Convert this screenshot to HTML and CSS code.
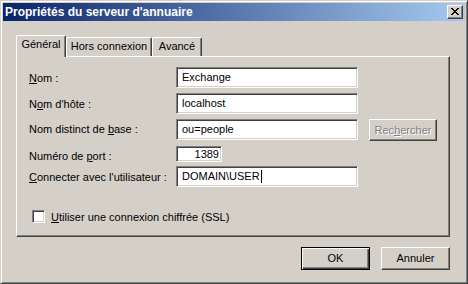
FILE: index.html
```html
<!DOCTYPE html>
<html lang="fr">
<head>
    <meta charset="UTF-8">
    <title>Propriétés du serveur d'annuaire</title>
    <link rel="stylesheet" href="styles.css">
</head>
<body>
    <div class="window">
        <div class="titlebar">
            <span class="title">Propriétés du serveur d'annuaire</span>
            <div class="close">
                <svg width="8" height="7" viewBox="0 0 8 7" shape-rendering="crispEdges">
                    <path fill="#000" d="M0 0h2v1H0zM6 0h2v1H6zM1 1h2v1H1zM5 1h2v1H5zM2 2h4v1H2zM3 3h2v1H3zM2 4h4v1H2zM1 5h2v1H1zM5 5h2v1H5zM0 6h2v1H0zM6 6h2v1H6z"/>
                </svg>
            </div>
        </div>

        <div class="content">
            <div class="tabs">
                <div class="tab tab-active tab-general">Général</div>
                <div class="tab tab-offline">Hors connexion</div>
                <div class="tab tab-advanced">Avancé</div>
            </div>

            <div class="panel">
                <div class="row">
                    <span class="label"><u>N</u>om :</span>
                    <div class="field field-wide">Exchange</div>
                </div>
                <div class="row">
                    <span class="label">N<u>o</u>m d'hôte :</span>
                    <div class="field field-wide">localhost</div>
                </div>
                <div class="row row-search">
                    <span class="label">Nom distinct de <u>b</u>ase :</span>
                    <div class="field field-wide">ou=people</div>
                    <div class="btn btn-search" aria-disabled="true">Rec<u>h</u>ercher</div>
                </div>
                <div class="row row-port">
                    <span class="label">Numéro de <u>p</u>ort :</span>
                    <div class="field field-port">1389</div>
                </div>
                <div class="row">
                    <span class="label"><u>C</u>onnecter avec l'utilisateur :</span>
                    <div class="field field-wide">DOMAIN\USER<span class="caret"></span></div>
                </div>

                <div class="check">
                    <span class="checkbox"></span>
                    <span><u>U</u>tiliser une connexion chiffrée (SSL)</span>
                </div>
            </div>

            <div class="actions">
                <div class="btn btn-default">OK</div>
                <div class="btn">Annuler</div>
            </div>
        </div>
    </div>
</body>
</html>
```

FILE: styles.css
```css
* {
    margin: 0;
    padding: 0;
    box-sizing: border-box;
}

body {
    font-family: 'Liberation Sans', Arial, sans-serif;
    font-size: 11px;
    color: #000;
    background: #d4d0c8;
}

u {
    text-decoration: underline;
    text-underline-offset: 1px;
}

.window {
    width: 468px;
    height: 284px;
    background: #d4d0c8;
    border: 1px solid;
    border-color: #d4d0c8 #404040 #404040 #d4d0c8;
    box-shadow: inset 1px 1px #fff, inset -1px -1px #808080;
    padding: 2px;
}

.titlebar {
    height: 18px;
    display: flex;
    align-items: center;
    justify-content: space-between;
    padding: 0 2px 0 2px;
    background: linear-gradient(to right, #0a246a 0%, #a6caf0 100%);
}

.title {
    color: #fff;
    font-weight: bold;
    font-size: 12px;
    line-height: 18px;
    white-space: nowrap;
}

.close {
    width: 16px;
    height: 14px;
    background: #d4d0c8;
    border: 1px solid;
    border-color: #fff #404040 #404040 #fff;
    box-shadow: inset -1px -1px #808080;
    padding: 2px 0 0 3px;
}

.close svg {
    display: block;
}

.content {
    padding: 14px 15px 0 13px;
}

.tabs {
    display: flex;
    align-items: flex-end;
    height: 21px;
    position: relative;
    z-index: 1;
}

.tab {
    height: 19px;
    padding-top: 2px;
    text-align: center;
    line-height: 13px;
    background: #d4d0c8;
    border-top: 1px solid #fff;
    border-left: 1px solid #fff;
    border-right: 1px solid #404040;
    border-radius: 2px 2px 0 0;
    box-shadow: inset -1px 0 #808080;
    white-space: nowrap;
}

.tab-active {
    height: 22px;
    margin-bottom: -1px;
}

.tab-general { width: 50px; }
.tab-offline { width: 86px; }
.tab-advanced { width: 50px; }

.panel {
    width: 434px;
    height: 181px;
    border: 1px solid;
    border-color: #fff #404040 #404040 #fff;
    box-shadow: inset -1px -1px #808080;
    padding: 10px 0 0 12px;
}

.row {
    display: flex;
    align-items: center;
    height: 21px;
    margin-bottom: 5px;
}

.row-search {
    align-items: flex-start;
    height: 22px;
}

.row-search .label {
    line-height: 21px;
}

.row-port {
    height: 16px;
    margin-bottom: 4px;
}

.row-port .label {
    padding-top: 3px;
}

.label {
    width: 147px;
    white-space: nowrap;
}

.field {
    height: 21px;
    background: #fff;
    border: 1px solid;
    border-color: #808080 #fff #fff #808080;
    box-shadow: inset 1px 1px #404040, inset -1px -1px #d4d0c8;
    padding: 0 5px;
    line-height: 19px;
    white-space: nowrap;
}

.field-wide {
    width: 182px;
}

.field-port {
    width: 46px;
    height: 16px;
    line-height: 14px;
    text-align: right;
    padding: 0 2px 0 0;
}

.caret {
    display: inline-block;
    width: 1px;
    height: 13px;
    background: #000;
    vertical-align: -3px;
    margin-left: 1px;
}

.btn {
    width: 69px;
    height: 23px;
    background: #d4d0c8;
    border: 1px solid;
    border-color: #fff #404040 #404040 #fff;
    box-shadow: inset -1px -1px #808080;
    text-align: center;
    line-height: 21px;
}

.btn-search {
    width: 68px;
    height: 22px;
    line-height: 20px;
    margin-left: 11px;
    color: #808080;
    text-shadow: 1px 1px #fff;
}

.btn-default {
    border-color: #000;
    box-shadow: inset 1px 1px #fff, inset -1px -1px #404040, inset -2px -2px #808080;
}

.check {
    display: flex;
    align-items: center;
    margin-top: 23px;
    padding-left: 3px;
}

.checkbox {
    width: 13px;
    height: 13px;
    margin-right: 6px;
    background: #fff;
    border: 1px solid;
    border-color: #808080 #fff #fff #808080;
    box-shadow: inset 1px 1px #404040, inset -1px -1px #d4d0c8;
}

.actions {
    display: flex;
    justify-content: flex-end;
    gap: 11px;
    margin-top: 10px;
}
```
